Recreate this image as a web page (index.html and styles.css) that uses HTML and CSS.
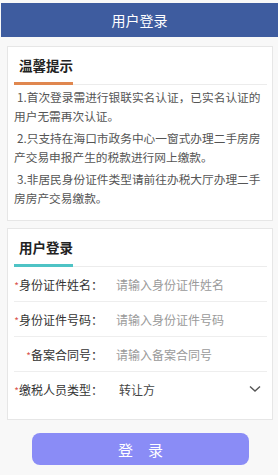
FILE: index.html
```html
<!DOCTYPE html>
<html>
<head>
  <meta charset="UTF-8">
  <title>用户登录</title>
  <link rel="stylesheet" href="styles.css">
</head>
<body>
  <div class="top-bar">用户登录</div>

  <div class="main">
    <div class="card">
      <div class="card-head orange"><span>温馨提示</span></div>
      <div class="tips">
        <p>1.首次登录需进行银联实名认证，已实名认证的用户无需再次认证。</p>
        <p>2.只支持在海口市政务中心一窗式办理二手房房产交易申报产生的税款进行网上缴款。</p>
        <p>3.非居民身份证件类型请前往办税大厅办理二手房房产交易缴款。</p>
      </div>
    </div>

    <div class="card">
      <div class="card-head teal"><span>用户登录</span></div>
      <div class="form">
        <div class="row">
          <label><i>*</i>身份证件姓名：</label>
          <input type="text" placeholder="请输入身份证件姓名">
        </div>
        <div class="row">
          <label><i>*</i>身份证件号码：</label>
          <input type="text" placeholder="请输入身份证件号码">
        </div>
        <div class="row">
          <label><i>*</i>备案合同号：</label>
          <input type="text" placeholder="请输入备案合同号">
        </div>
        <div class="row last">
          <label><i>*</i>缴税人员类型：</label>
          <div class="select">
            <span>转让方</span>
            <svg width="12" height="8" viewBox="0 0 12 8">
              <path d="M1 1.5 L6 6 L11 1.5" fill="none" stroke="#555" stroke-width="1.4"/>
            </svg>
          </div>
        </div>
      </div>
    </div>

    <button class="login-btn">登　录</button>
  </div>
</body>
</html>
```

FILE: styles.css
```css
body {
  margin: 0;
  padding: 3px 0 0 1px;
  background: #f8f8f8;
  font-family: "Noto Sans CJK SC", "Noto Sans", sans-serif;
  color: #333;
}

.top-bar {
  height: 34px;
  line-height: 34px;
  background: #3e5c9f;
  color: white;
  text-align: center;
  font-size: 14px;
}

.main {
  padding: 9px 5px 0 6px;
}

.card {
  background: #fff;
  border: 1px solid #e6e6e6;
  padding: 0 5px 0 6px;
  margin-bottom: 7px;
}

.card-head {
  height: 37px;
  border-bottom: 1px solid #ececec;
  position: relative;
  font-size: 13.5px;
  font-weight: bold;
  color: #222;
  padding-left: 5px;
  line-height: 37px;
}

.card-head::after {
  content: "";
  position: absolute;
  left: 0;
  bottom: -1px;
  width: 59px;
  height: 3px;
}

.card-head.orange::after {
  background: #e0874f;
}

.card-head.teal::after {
  background: #4ec3c5;
}

.tips {
  padding: 2px 0 10px;
  font-size: 11.7px;
  line-height: 19px;
  color: #555;
}

.tips p {
  margin: 0 0 3px;
  text-indent: 3px;
}

.form {
  padding-bottom: 13px;
}

.row {
  height: 34px;
  display: flex;
  align-items: center;
  border-bottom: 1px solid #eeeeee;
  font-size: 12px;
}

.row.last {
  border-bottom: none;
}

.row label {
  width: 89px;
  text-align: right;
  color: #333;
  flex-shrink: 0;
}

.row label i {
  font-style: normal;
  color: #d9534f;
  font-size: 10px;
}

.row input {
  flex: 1;
  min-width: 0;
  border: none;
  outline: none;
  margin-left: 13px;
  padding: 0;
  font-family: inherit;
  font-size: 12px;
  color: #333;
  background: transparent;
}

.row input::placeholder {
  color: #9a9a9a;
}

.select {
  flex: 1;
  display: flex;
  align-items: center;
  justify-content: space-between;
  margin-left: 16px;
  padding-right: 6px;
  color: #444;
}

.login-btn {
  display: block;
  width: 217px;
  height: 32px;
  margin: 13px 0 0 25px;
  border: none;
  border-radius: 8px;
  background: #8a8cf6;
  color: white;
  font-family: inherit;
  font-size: 15px;
}
```
